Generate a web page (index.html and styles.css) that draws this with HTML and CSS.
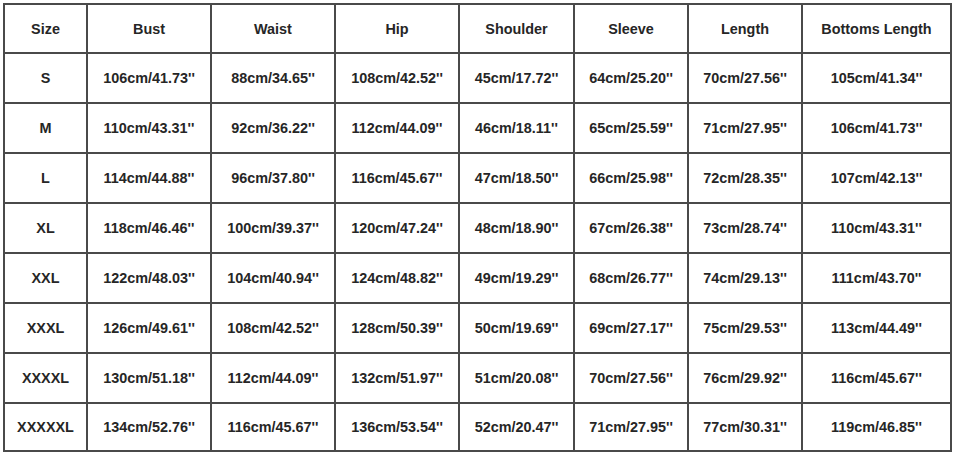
FILE: index.html
```html
<!DOCTYPE html>
<html lang="en">
<head>
<meta charset="utf-8">
<title>Size Chart</title>
<link rel="stylesheet" href="styles.css">
</head>
<body>
<div class="chart">
  <div class="cell head">Size</div><div class="cell head">Bust</div><div class="cell head">Waist</div><div class="cell head">Hip</div><div class="cell head">Shoulder</div><div class="cell head">Sleeve</div><div class="cell head">Length</div><div class="cell head">Bottoms Length</div>

  <div class="cell">S</div><div class="cell">106cm/41.73''</div><div class="cell">88cm/34.65''</div><div class="cell">108cm/42.52''</div><div class="cell">45cm/17.72''</div><div class="cell">64cm/25.20''</div><div class="cell">70cm/27.56''</div><div class="cell">105cm/41.34''</div>

  <div class="cell">M</div><div class="cell">110cm/43.31''</div><div class="cell">92cm/36.22''</div><div class="cell">112cm/44.09''</div><div class="cell">46cm/18.11''</div><div class="cell">65cm/25.59''</div><div class="cell">71cm/27.95''</div><div class="cell">106cm/41.73''</div>

  <div class="cell">L</div><div class="cell">114cm/44.88''</div><div class="cell">96cm/37.80''</div><div class="cell">116cm/45.67''</div><div class="cell">47cm/18.50''</div><div class="cell">66cm/25.98''</div><div class="cell">72cm/28.35''</div><div class="cell">107cm/42.13''</div>

  <div class="cell">XL</div><div class="cell">118cm/46.46''</div><div class="cell">100cm/39.37''</div><div class="cell">120cm/47.24''</div><div class="cell">48cm/18.90''</div><div class="cell">67cm/26.38''</div><div class="cell">73cm/28.74''</div><div class="cell">110cm/43.31''</div>

  <div class="cell">XXL</div><div class="cell">122cm/48.03''</div><div class="cell">104cm/40.94''</div><div class="cell">124cm/48.82''</div><div class="cell">49cm/19.29''</div><div class="cell">68cm/26.77''</div><div class="cell">74cm/29.13''</div><div class="cell">111cm/43.70''</div>

  <div class="cell">XXXL</div><div class="cell">126cm/49.61''</div><div class="cell">108cm/42.52''</div><div class="cell">128cm/50.39''</div><div class="cell">50cm/19.69''</div><div class="cell">69cm/27.17''</div><div class="cell">75cm/29.53''</div><div class="cell">113cm/44.49''</div>

  <div class="cell">XXXXL</div><div class="cell">130cm/51.18''</div><div class="cell">112cm/44.09''</div><div class="cell">132cm/51.97''</div><div class="cell">51cm/20.08''</div><div class="cell">70cm/27.56''</div><div class="cell">76cm/29.92''</div><div class="cell">116cm/45.67''</div>

  <div class="cell">XXXXXL</div><div class="cell">134cm/52.76''</div><div class="cell">116cm/45.67''</div><div class="cell">136cm/53.54''</div><div class="cell">52cm/20.47''</div><div class="cell">71cm/27.95''</div><div class="cell">77cm/30.31''</div><div class="cell">119cm/46.85''</div>
</div>
</body>
</html>
```

FILE: styles.css
```css
html, body {
  margin: 0;
  padding: 0;
  background: #ffffff;
}

body {
  padding: 3px 0 0 3px;
  font-family: "Liberation Sans", Arial, sans-serif;
}

.chart {
  display: grid;
  grid-template-columns: 83px 124px 124px 124px 115px 114px 114px 149px;
  grid-template-rows: 49px repeat(7, 50px) 48px;
  width: max-content;
  border-left: 2px solid #4a4a4a;
  border-top: 2px solid #4a4a4a;
}

.cell {
  box-sizing: border-box;
  display: flex;
  align-items: center;
  justify-content: center;
  border-right: 2px solid #4a4a4a;
  border-bottom: 2px solid #4a4a4a;
  font-size: 14.4px;
  font-weight: bold;
  color: #262626;
  white-space: nowrap;
}
```
